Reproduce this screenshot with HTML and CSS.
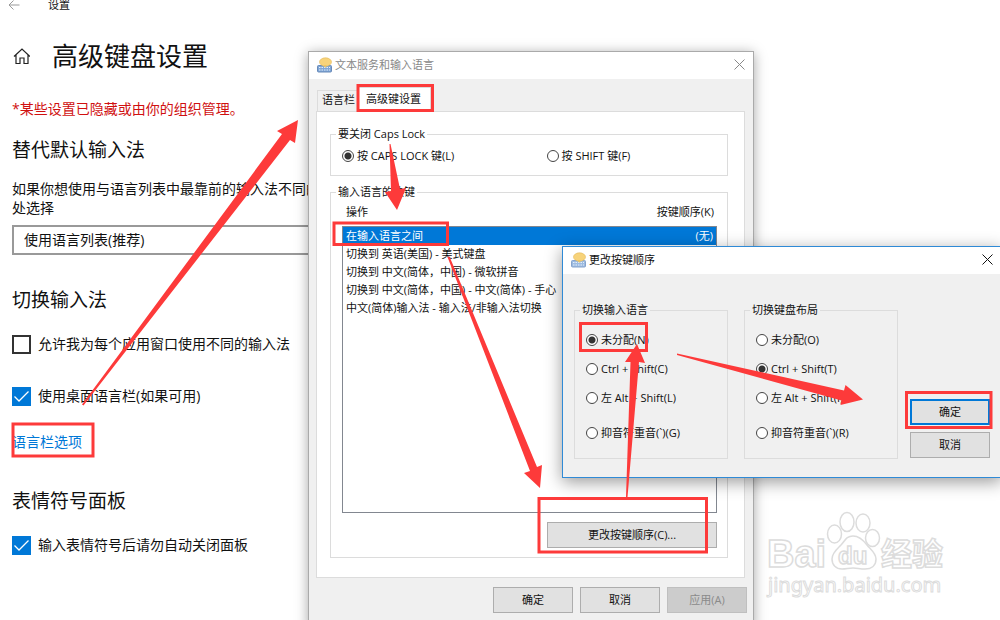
FILE: index.html
```html
<!DOCTYPE html>
<html lang="zh-CN">
<head>
<meta charset="utf-8">
<title>高级键盘设置</title>
<link rel="stylesheet" href="styles.css">
</head>
<body>
<div class="desktop">
  <main class="settings">
    <div class="topbar">
      <button class="back" type="button" aria-label="返回">
        <svg width="12" height="10" viewBox="0 0 12 10"><path d="M5.500 0.500 1 5l4.500 4.500M1 5h10.500" fill="none" stroke="#999"/></svg>
      </button>
      <span>设置</span>
    </div>
    <header class="page-head">
      <svg width="18" height="18" viewBox="0 0 18 18"><path d="M2 9.500 10 2l8 7.500M4 8v8.500h4V11h4v5.500h4V8" fill="none" stroke="#222" stroke-width="1.200"/></svg>
      <h1>高级键盘设置</h1>
    </header>
    <p class="notice">*某些设置已隐藏或由你的组织管理。</p>
    <h2>替代默认输入法</h2>
    <label class="hint" for="ime">如果你想使用与语言列表中最靠前的输入法不同的<br>处选择</label>
    <select class="combo" id="ime"><option>使用语言列表(推荐)</option></select>
    <h2 class="section">切换输入法</h2>
    <label class="check"><input type="checkbox">允许我为每个应用窗口使用不同的输入法</label>
    <label class="check check-next"><input type="checkbox" checked>使用桌面语言栏(如果可用)</label>
    <a class="link" href="#">语言栏选项</a>
    <h2 class="section section-last">表情符号面板</h2>
    <label class="check"><input type="checkbox" checked>输入表情符号后请勿自动关闭面板</label>
  </main>

  <svg class="watermark" width="184" height="92" viewBox="764 508 184 92" role="img" aria-label="Baidu 经验">
    <g fill="#fff" stroke="#dcdcdc" stroke-width="1.500">
      <ellipse cx="834.500" cy="534" rx="7" ry="9"/>
      <ellipse cx="847" cy="522" rx="7" ry="9.500"/>
      <ellipse cx="863" cy="523" rx="7" ry="9"/>
      <ellipse cx="872.500" cy="538" rx="7" ry="8.500"/>
      <path d="M853 536c7 0 11 5 14 9s9 8 9 14c0 7-5 10-11 10-5 0-8-1-12-1s-7 1-11 1c-6 0-10-4-10-10s5-10 9-14 5-9 12-9z"/>
      <text class="wm-latin" x="767" y="567" font-size="38">Bai</text>
      <text class="wm-latin" x="838" y="564" font-size="24">du</text>
      <text class="wm-cjk" x="881" y="565" font-size="31">经验</text>
      <text class="wm-site" x="768" y="592" font-size="20" stroke-width="1">jingyan.baidu.com</text>
    </g>
  </svg>

  <section class="window services" aria-label="文本服务和输入语言">
    <header class="title-bar inactive">
      <svg width="16" height="16" viewBox="0 0 16 16"><rect x="0.500" y="8.500" width="14" height="6.500" rx="1" fill="#7fa6d6" stroke="#6789b8"/><path d="M2 10.500h11M2 13h11" stroke="#e4eefa" stroke-dasharray="1.500 1"/><ellipse cx="8.500" cy="5" rx="6" ry="4.200" fill="#f7d37a" stroke="#e3b95a" stroke-width="0.600"/><path d="m7 8 1 3 2-3z" fill="#f0c560"/></svg>
      <span>文本服务和输入语言</span>
      <button class="close" type="button" aria-label="关闭"><svg width="11" height="11" viewBox="0 0 11 11"><path d="m0.500 0.500 10 10M10.500 0.500l-10 10" stroke="currentColor"/></svg></button>
    </header>
    <div class="services-body">
      <div class="tabs" role="tablist">
        <button class="tab" type="button" role="tab">语言栏</button>
        <button class="tab tab-active" type="button" role="tab" aria-selected="true">高级键设置</button>
      </div>
      <div class="tab-panel">
        <fieldset class="group">
          <legend>要关闭 Caps Lock</legend>
          <div class="caps-options">
            <label class="radio"><input type="radio" name="caps" checked>按 CAPS LOCK 键(L)</label>
            <label class="radio"><input type="radio" name="caps">按 SHIFT 键(F)</label>
          </div>
        </fieldset>
        <fieldset class="group">
          <legend>输入语言的热键</legend>
          <div class="list-head"><span>操作</span><span>按键顺序(K)</span></div>
          <ul class="list" role="listbox" aria-label="操作">
            <li class="selected" role="option" aria-selected="true"><span>在输入语言之间</span><span>(无)</span></li>
            <li role="option">切换到 英语(美国) - 美式键盘</li>
            <li role="option">切换到 中文(简体，中国) - 微软拼音</li>
            <li role="option">切换到 中文(简体，中国) - 中文(简体) - 手心</li>
            <li role="option">中文(简体)输入法 - 输入法/非输入法切换</li>
          </ul>
          <button class="btn change" type="button">更改按键顺序(C)...</button>
        </fieldset>
      </div>
    </div>
    <footer class="actions">
      <button class="btn" type="button">确定</button>
      <button class="btn" type="button">取消</button>
      <button class="btn" type="button" disabled>应用(A)</button>
    </footer>
  </section>

  <section class="window sequence" aria-label="更改按键顺序">
    <header class="title-bar">
      <svg width="16" height="16" viewBox="0 0 16 16"><rect x="0.500" y="8.500" width="14" height="6.500" rx="1" fill="#9dbbe0" stroke="#86a3cc"/><path d="M2 10.500h11M2 13h11" stroke="#e4eefa" stroke-dasharray="1.500 1"/><ellipse cx="8.500" cy="5" rx="6" ry="4.200" fill="#f7d37a" stroke="#e3b95a" stroke-width="0.600"/><path d="m7 8 1 3 2-3z" fill="#f0c560"/></svg>
      <span>更改按键顺序</span>
      <button class="close" type="button" aria-label="关闭"><svg width="11" height="11" viewBox="0 0 11 11"><path d="m0.500 0.500 10 10M10.500 0.500l-10 10" stroke="currentColor"/></svg></button>
    </header>
    <div class="sequence-body">
      <fieldset class="group keys">
        <legend>切换输入语言</legend>
        <label class="radio"><input type="radio" name="lang" checked>未分配(N)</label>
        <label class="radio"><input type="radio" name="lang">Ctrl + Shift(C)</label>
        <label class="radio"><input type="radio" name="lang">左 Alt + Shift(L)</label>
        <label class="radio radio-last"><input type="radio" name="lang">抑音符重音(`)(G)</label>
      </fieldset>
      <fieldset class="group keys">
        <legend>切换键盘布局</legend>
        <label class="radio"><input type="radio" name="layout">未分配(O)</label>
        <label class="radio"><input type="radio" name="layout" checked>Ctrl + Shift(T)</label>
        <label class="radio"><input type="radio" name="layout">左 Alt + Shift(I)</label>
        <label class="radio radio-last"><input type="radio" name="layout">抑音符重音(`)(R)</label>
      </fieldset>
      <div class="side-actions">
        <button class="btn btn-default" type="button">确定</button>
        <button class="btn" type="button">取消</button>
      </div>
    </div>
  </section>

  <svg class="marks" width="1000" height="620" viewBox="0 0 1000 620" aria-hidden="true">
    <g fill="none" stroke="#fd3a3a" stroke-width="3">
      <rect x="13" y="424" width="80" height="32"/>
      <rect x="358" y="85.500" width="74.500" height="25"/>
      <rect x="334" y="223" width="113.500" height="21.500"/>
      <rect x="539" y="498.500" width="167.500" height="53.500"/>
      <rect x="580.500" y="323.500" width="66" height="27"/>
      <rect x="906.500" y="392.500" width="84.500" height="35"/>
    </g>
    <g fill="#fd3a3a">
      <path d="M82 404.500 282 134 277 131 298 120 295 143 290 140 83.500 405.500z"/>
      <path d="M389.500 144h1L400 189 406 188 397 210 385 192 391 191z"/>
      <path d="M447.500 257 449.500 256.500 537 467 542 465 540 488 524 473 530 471z"/>
      <path d="M626 497 630.500 362 625 362 637 344 645 363 639 362 627.500 497z"/>
      <path d="M677 353.500 844 390.500 845.500 385 863 399.500 840.500 405 841.500 400.500 677 355z"/>
    </g>
  </svg>
</div>
</body>
</html>
```
FILE: styles.css
```css
* { box-sizing: border-box; }

body {
  margin: 0;
  background: #fff;
  color: #111;
  font: 11px/16px "Open Sans", "Noto Sans CJK SC", sans-serif;
}

button, select, input { font: inherit; color: inherit; }

.desktop {
  position: relative;
  min-height: 100vh;
  overflow: hidden;
}

/* Settings page */
.settings {
  width: 36%;
  padding-left: 12px;
  font-size: 14px;
  line-height: 20px;
  white-space: nowrap;
}

.topbar {
  display: flex;
  align-items: center;
  height: 10px;
  gap: 28px;
  font-size: 11px;
  margin-left: -4px;
}

.back {
  display: flex;
  padding: 0;
  border: 0;
  background: none;
}

.page-head {
  display: flex;
  align-items: center;
  gap: 22px;
  height: 40px;
  margin-top: 26px;
}

h1, h2 { margin: 0; font-weight: 400; }
h1 { font-size: 26px; line-height: 40px; }
h2 { margin-top: 18px; font-size: 19px; line-height: 26px; }

.notice { margin: 23px 0 0; color: #d01010; }

.hint {
  display: block;
  margin-top: 16px;
  line-height: 19px;
}

.combo {
  display: block;
  width: 100%;
  height: 30px;
  margin-top: 8px;
  padding: 0 10px;
  border: 2px solid #999;
  border-radius: 0;
  background: #fff;
  appearance: none;
}

.section { margin-top: 32px; }
.section-last { margin-top: 36px; }

.check {
  display: flex;
  align-items: center;
  gap: 7px;
  height: 20px;
  margin-top: 21px;
}

.check-next { margin-top: 32px; }

.check input {
  width: 19px;
  height: 19px;
  margin: 0;
  border: 2px solid #333;
  background: #fff;
  appearance: none;
}

.check input:checked {
  border: 0;
  background: #0078d7 url("data:image/svg+xml,%3Csvg xmlns='http://www.w3.org/2000/svg' viewBox='0 0 19 19'%3E%3Cpath d='m2.500 9.500 4.500 4.500 9.500-9.500' fill='none' stroke='white' stroke-width='1.300'/%3E%3C/svg%3E");
}

.link {
  display: block;
  margin-top: 26px;
  color: #0078d7;
  text-decoration: none;
}

/* Windows */
.window {
  position: absolute;
  background: #f0f0f0;
}

.services {
  left: 308px;
  top: 51px;
  width: 446px;
  padding-bottom: 16px;
  border: 1px solid #aaa;
  box-shadow: 0 2px 12px rgba(0, 0, 0, 0.35);
}

.sequence {
  left: 562px;
  top: 246px;
  width: 440px;
  border: 1px solid #2f8ad6;
  box-shadow: 0 4px 16px rgba(0, 0, 0, 0.4);
}

.title-bar {
  display: flex;
  align-items: center;
  gap: 2px;
  height: 27px;
  padding: 0 8px 2px;
  background: #fff;
}

.inactive { color: #888; }

.close {
  display: flex;
  margin-left: auto;
  padding: 0;
  border: 0;
  background: none;
}

.services-body { padding: 8px 8px 0 7px; }

.tabs {
  display: flex;
  align-items: flex-end;
  height: 24px;
  padding-left: 1px;
}

.tab {
  height: 21px;
  padding: 0 0 2px 4px;
  border: 1px solid #dcdcdc;
  border-bottom: 0;
  background: #f0f0f0;
  width: 41px;
  text-align: left;
  white-space: nowrap;
}

.tab-active {
  width: 73px;
  height: 24px;
  padding: 0 0 2px 7px;
  background: #fff;
}

.tab-panel {
  display: grid;
  gap: 8px;
  padding: 14px 16px 19px 13px;
  border: 1px solid #dcdcdc;
  background: #fff;
}

.group {
  min-width: 0;
  margin: 0;
  padding: 4px 10px 9px 11px;
  border: 1px solid #dcdcdc;
}

legend {
  margin-left: -6px;
  padding: 0 2px;
}

.caps-options {
  display: grid;
  grid-template-columns: 6fr 5fr;
}

.radio {
  display: flex;
  align-items: center;
  gap: 3px;
  height: 20px;
  white-space: nowrap;
}

.radio input {
  width: 12px;
  height: 12px;
  margin: 0;
  border: 1px solid #444;
  border-radius: 50%;
  background: #fff;
  appearance: none;
}

.radio input:checked {
  background: radial-gradient(circle, #333 3px, #fff 4px);
}

.list-head {
  display: flex;
  justify-content: space-between;
  padding: 0 3px 0 4px;
}

.list {
  height: 287px;
  margin: 6px 0 9px;
  padding: 0;
  border: 1px solid #828790;
  background: #fff;
  list-style: none;
  line-height: 18px;
}

.list li {
  display: flex;
  justify-content: space-between;
  padding: 0 3px;
  white-space: nowrap;
}

.selected { background: #0078d7; color: #fff; }

.btn {
  width: 80px;
  height: 26px;
  padding: 0;
  border: 1px solid #adadad;
  background: #e1e1e1;
}

.btn:disabled { background: #ccc; border-color: #bfbfbf; color: #8a8a8a; }
.btn-default { border: 2px solid #0078d7; }

.change {
  display: block;
  width: 170px;
  margin-left: auto;
}

.actions {
  display: flex;
  justify-content: flex-end;
  gap: 7px;
  padding: 9px 6px 0;
}

.sequence-body {
  display: flex;
  gap: 16px;
  padding: 28px 11px 18px;
}

.keys {
  flex: 0 0 154px;
  padding: 12px 0 15px 11px;
}

.keys .radio { margin-bottom: 9px; }
.keys .radio-last { margin: 15px 0 0; }

.side-actions {
  display: flex;
  flex-direction: column;
  justify-content: flex-end;
  gap: 7px;
  margin-left: -4px;
  padding-bottom: 1px;
}

/* Overlays */
.marks {
  position: absolute;
  left: 0;
  top: 0;
  pointer-events: none;
}

.watermark {
  position: absolute;
  left: 764px;
  top: 508px;
}

.wm-latin { font-family: "Liberation Sans", sans-serif; font-weight: 700; }
.wm-cjk { font-family: "Noto Sans CJK SC", sans-serif; font-weight: 700; }
.wm-site { font-family: "Noto Sans", sans-serif; }
```
